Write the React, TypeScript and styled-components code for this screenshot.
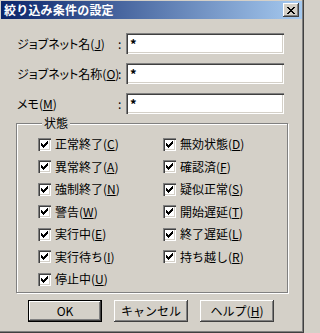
import { styled, createGlobalStyle } from "styled-components";

const GlobalStyle = createGlobalStyle`
  html, body {
    margin: 0;
    padding: 0;
    background: #d4d0c8;
  }
  body {
    font-family: "Noto Sans CJK JP", "Noto Sans", sans-serif;
    font-size: 12px;
    color: #000;
  }
`;

const fields = [
  { label: "ジョブネット名", key: "J" },
  { label: "ジョブネット名称", key: "O" },
  { label: "メモ", key: "M" },
];

const states = [
  { label: "正常終了", key: "C" },
  { label: "異常終了", key: "A" },
  { label: "強制終了", key: "N" },
  { label: "警告", key: "W" },
  { label: "実行中", key: "E" },
  { label: "実行待ち", key: "I" },
  { label: "停止中", key: "U" },
  { label: "無効状態", key: "D" },
  { label: "確認済", key: "F" },
  { label: "疑似正常", key: "S" },
  { label: "開始遅延", key: "T" },
  { label: "終了遅延", key: "L" },
  { label: "持ち越し", key: "R" },
];

const checkTops = [2, 3, 4, 3, 2, 1, 0];
const closeRows = [
  [0, 1, 6, 7],
  [1, 2, 5, 6],
  [2, 3, 4, 5],
  [3, 4],
  [2, 3, 4, 5],
  [1, 2, 5, 6],
  [0, 1, 6, 7],
];

const Mnemonic = ({ k }: { k: string }) => (
  <StParen>
    (<u>{k}</u>)
  </StParen>
);

const CheckMark = () => (
  <svg width="7" height="7" viewBox="0 0 7 7" shapeRendering="crispEdges">
    {checkTops.map((top, i) => (
      <rect key={i} x={i} y={top} width="1" height="3" fill="#000" />
    ))}
  </svg>
);

const CloseGlyph = () => (
  <svg width="8" height="7" viewBox="0 0 8 7" shapeRendering="crispEdges">
    {closeRows.map((cols, y) =>
      cols.map((x) => (
        <rect key={`${y}-${x}`} x={x} y={y} width="1" height="1" fill="#000" />
      ))
    )}
  </svg>
);

const App = () => {
  return (
    <>
      <GlobalStyle />
      <StWindow>
        <StTitleBar>
          <StTitle>絞り込み条件の設定</StTitle>
          <StCloseButton>
            <CloseGlyph />
          </StCloseButton>
        </StTitleBar>

        <StFields>
          {fields.map((f) => (
            <StFieldRow key={f.key}>
              <StFieldLabel>
                {f.label}
                <Mnemonic k={f.key} />
              </StFieldLabel>
              <StColon>:</StColon>
              <StTextBox>*</StTextBox>
            </StFieldRow>
          ))}
        </StFields>

        <StGroup>
          <StLegend>状態</StLegend>
          <StCheckGrid>
            {states.map((s) => (
              <StCheckItem key={s.key}>
                <StCheckBox>
                  <CheckMark />
                </StCheckBox>
                <span>
                  {s.label}
                  <Mnemonic k={s.key} />
                </span>
              </StCheckItem>
            ))}
          </StCheckGrid>
        </StGroup>

        <StButtonRow>
          <StButton $default>OK</StButton>
          <StButton>キャンセル</StButton>
          <StButton>
            ヘルプ
            <Mnemonic k="H" />
          </StButton>
        </StButtonRow>
      </StWindow>
    </>
  );
};

export default App;

const raised = `
  box-shadow:
    inset -1px -1px #404040,
    inset 1px 1px #ffffff,
    inset -2px -2px #808080,
    inset 2px 2px #d4d0c8;
`;

const sunken = `
  box-shadow:
    inset 1px 1px #808080,
    inset 2px 2px #404040,
    inset -1px -1px #ffffff,
    inset -2px -2px #d4d0c8;
`;

const StWindow = styled.div`
  display: flex;
  flex-direction: column;

  width: 304px;
  height: 333px;
  padding: 1px 2px 2px 1px;

  background: #d4d0c8;
  box-shadow:
    inset -1px -1px #404040,
    inset -2px -2px #808080;
  box-sizing: border-box;
`;

const StTitleBar = styled.div`
  display: flex;
  align-items: center;
  justify-content: space-between;

  height: 18px;
  padding: 0 3px 0 3px;

  background: linear-gradient(to right, #0a246a, #a6caf0);
`;

const StTitle = styled.span`
  color: #ffffff;
  font-size: 12px;
  font-weight: 700;
  line-height: 18px;
  letter-spacing: 0.2px;
`;

const StCloseButton = styled.div`
  display: flex;
  align-items: center;
  justify-content: center;

  width: 16px;
  height: 14px;

  background: #d4d0c8;
  ${raised}
`;

const StFields = styled.div`
  display: flex;
  flex-direction: column;
  gap: 9px;

  margin: 14px 0 0 16px;
`;

const StFieldRow = styled.div`
  display: grid;
  grid-template-columns: 101px 8px 158px;
  align-items: center;

  height: 21px;
`;

const StFieldLabel = styled.span`
  white-space: nowrap;
  font-feature-settings: "palt";
  line-height: 14px;
`;

const StColon = styled.span`
  line-height: 14px;
`;

const StTextBox = styled.div`
  height: 21px;
  padding: 3px 4px;

  background: #ffffff;
  font-size: 13px;
  font-weight: 700;
  line-height: 15px;
  box-sizing: border-box;
  ${sunken}
`;

const StGroup = styled.fieldset`
  width: 272px;
  height: 177px;
  margin: 2px 0 0 15px;
  padding: 3px 0 0 21px;

  border: 1px solid #808080;
  box-shadow:
    inset 1px 1px #ffffff,
    1px 1px #ffffff;
  box-sizing: border-box;
`;

const StLegend = styled.legend`
  margin-left: 4px;
  padding: 0 2px;

  background: #d4d0c8;
  line-height: 14px;
`;

const StCheckGrid = styled.div`
  display: grid;
  grid-auto-flow: column;
  grid-template-rows: repeat(7, 22.5px);
  grid-template-columns: 125px 110px;
`;

const StCheckItem = styled.div`
  display: flex;
  align-items: center;
  gap: 4px;

  line-height: 14px;
  white-space: nowrap;
`;

const StCheckBox = styled.span`
  display: flex;
  align-items: center;
  justify-content: center;
  flex-shrink: 0;

  width: 13px;
  height: 13px;

  background: #ffffff;
  ${sunken}
`;

const StParen = styled.span`
  & > u {
    text-decoration-thickness: 1px;
    text-underline-offset: 1px;
  }
`;

const StButtonRow = styled.div`
  display: flex;
  justify-content: center;
  gap: 12px;

  margin-top: 7px;
  padding-right: 1px;
`;

const StButton = styled.div<{ $default?: boolean }>`
  display: flex;
  align-items: center;
  justify-content: center;

  width: 74px;
  height: 22px;

  background: #d4d0c8;
  line-height: 14px;
  box-sizing: border-box;
  border: ${({ $default }) => ($default ? "1px solid #000000" : "none")};
  ${raised}
`;
